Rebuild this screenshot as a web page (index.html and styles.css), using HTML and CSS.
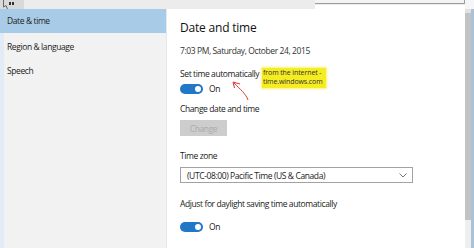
FILE: index.html
```html
<!DOCTYPE html>
<html lang="en">
<head>
    <meta charset="UTF-8">
    <title>Date and time</title>
    <link rel="stylesheet" href="styles.css">
</head>
<body>
    <div class="window">
        <div class="topbar">
            <div class="back-icon">
                <svg width="24" height="9" viewBox="0 0 24 9">
                    <path d="M3.5 0 L3.5 7 L6 5.5 L7.5 9" fill="none" stroke="#666" stroke-width="1"/>
                    <rect x="9" y="2" width="2" height="3" fill="#333"/>
                    <rect x="12" y="2" width="2" height="3" fill="#333"/>
                </svg>
            </div>
            <div class="topbar-fill"></div>
            <div class="frame-edge"></div>
            <div class="topbar-right"></div>
        </div>
        <div class="main">
            <nav class="sidebar">
                <a class="nav-item active">Date &amp; time</a>
                <a class="nav-item">Region &amp; language</a>
                <a class="nav-item">Speech</a>
            </nav>
            <section class="content">
                <h1 class="title">Date and time</h1>
                <p class="now">7:03 PM, Saturday, October 24, 2015</p>

                <div class="setting auto-time">
                    <div class="label">Set time automatically</div>
                    <div class="toggle-row">
                        <span class="toggle"><span class="knob"></span></span>
                        <span>On</span>
                    </div>
                    <div class="note">from the internet -<br>time.windows.com</div>
                    <svg class="arrow" width="20" height="22" viewBox="0 0 20 22">
                        <path d="M17 20 C15 14 9 9 3 3" fill="none" stroke="#d33" stroke-width="1"/>
                        <path d="M2 2 L9 4 M2 2 L3.5 8" fill="none" stroke="#d33" stroke-width="1"/>
                    </svg>
                </div>

                <div class="setting change-time">
                    <div class="label">Change date and time</div>
                    <button class="change-btn" disabled>Change</button>
                </div>

                <div class="setting time-zone">
                    <div class="label">Time zone</div>
                    <div class="select">
                        <span>(UTC-08:00) Pacific Time (US &amp; Canada)</span>
                        <svg width="8" height="5" viewBox="0 0 8 5">
                            <path d="M0.5 0.5 L4 4 L7.5 0.5" fill="none" stroke="#777" stroke-width="1"/>
                        </svg>
                    </div>
                </div>

                <div class="setting dst">
                    <div class="label">Adjust for daylight saving time automatically</div>
                    <div class="toggle-row">
                        <span class="toggle"><span class="knob"></span></span>
                        <span>On</span>
                    </div>
                </div>

                <h2 class="subtitle">Formats</h2>
            </section>
            <div class="scrollbar">
                <div class="scroll-up"></div>
                <div class="thumb"></div>
            </div>
            <div class="edge"></div>
        </div>
    </div>
</body>
</html>
```

FILE: styles.css
```css
body {
    margin: 0;
    padding: 0;
    font-family: "Open Sans", "Noto Sans", sans-serif;
    font-size: 8.5px;
    letter-spacing: -0.4px;
    color: #222;
    background-color: #fff;
    overflow: hidden;
}
.window {
    width: 474px;
    height: 248px;
    display: flex;
    flex-direction: column;
    overflow: hidden;
}
.topbar {
    height: 9px;
    display: flex;
    background-color: #ececec;
}
.back-icon {
    width: 24px;
    background-color: #d9d9d9;
}
.topbar-fill {
    flex: 1;
}
.frame-edge {
    width: 149px;
    height: 3px;
    background-color: #f3f3f3;
    border-bottom: 1px solid #9c9c9c;
    border-right: 1px solid #9c9c9c;
    box-shadow: 0 5px 0 0 #fff;
}
.topbar-right {
    width: 9px;
    background-color: #f6f6f6;
}
.main {
    flex: 1;
    display: flex;
    min-height: 0;
}
.sidebar {
    width: 167px;
    background-color: #f2f2f2;
    border-left: 4px solid #e2ecf6;
    border-right: 1px solid #e8e8e8;
    box-sizing: border-box;
    display: flex;
    flex-direction: column;
}
.nav-item {
    height: 24px;
    line-height: 24px;
    margin-left: -4px;
    padding-left: 7px;
    color: #222;
}
.nav-item.active {
    background-color: #a8cbe8;
    margin-bottom: 2px;
}
.content {
    flex: 1;
    padding: 11px 0 0 13px;
    background-color: #fff;
}
.title {
    margin: 0;
    font-size: 12px;
    letter-spacing: -0.2px;
    font-weight: 400;
    line-height: 16px;
    color: #111;
}
.now {
    margin: 9px 0 0;
    line-height: 11px;
    color: #333;
}
.setting {
    position: relative;
}
.label {
    line-height: 11px;
}
.auto-time {
    margin-top: 12px;
}
.change-time {
    margin-top: 9px;
}
.time-zone {
    margin-top: 14px;
}
.dst {
    margin-top: 15px;
}
.toggle-row {
    display: flex;
    align-items: center;
    gap: 6px;
    margin-top: 4px;
    height: 11px;
}
.dst .toggle-row {
    margin-top: 12px;
}
.toggle {
    width: 23px;
    height: 10px;
    border-radius: 5px;
    background-color: #2277c6;
    display: flex;
    justify-content: flex-end;
    align-items: center;
    padding: 0 2px;
    box-sizing: border-box;
}
.knob {
    width: 6px;
    height: 6px;
    border-radius: 50%;
    background-color: #fff;
}
.change-btn {
    display: block;
    margin-top: 6px;
    width: 47px;
    height: 16px;
    padding: 0;
    border: none;
    background-color: #cdcdcd;
    color: #ababab;
    font-family: inherit;
    font-size: 8.5px;
    letter-spacing: -0.4px;
}
.select {
    margin-top: 6px;
    width: 233px;
    height: 16px;
    box-sizing: border-box;
    border: 1px solid #a2a2a2;
    display: flex;
    align-items: center;
    justify-content: space-between;
    padding: 0 5px 0 6px;
}
.subtitle {
    margin: 13px 0 0;
    font-size: 13px;
    letter-spacing: 0;
    line-height: 17px;
    font-weight: 400;
}
/* annotation over the screenshot */
.note {
    position: absolute;
    left: 82px;
    top: 0;
    padding: 0 3px 2px 1px;
    background-color: #f6ec22;
    box-shadow: 0 0 2px 1px #f9f27a;
    font-size: 7px;
    letter-spacing: -0.1px;
    line-height: 9px;
    color: #333;
}
.arrow {
    position: absolute;
    left: 51px;
    top: 12px;
}
.scrollbar {
    width: 6px;
    background-color: #efefef;
    display: flex;
    flex-direction: column;
}
.scroll-up {
    height: 4px;
    background-color: #e2e2e2;
}
.thumb {
    height: 207px;
    background-color: #c3c3c3;
}
.edge {
    width: 3px;
    background-color: #a9c2da;
}
```
